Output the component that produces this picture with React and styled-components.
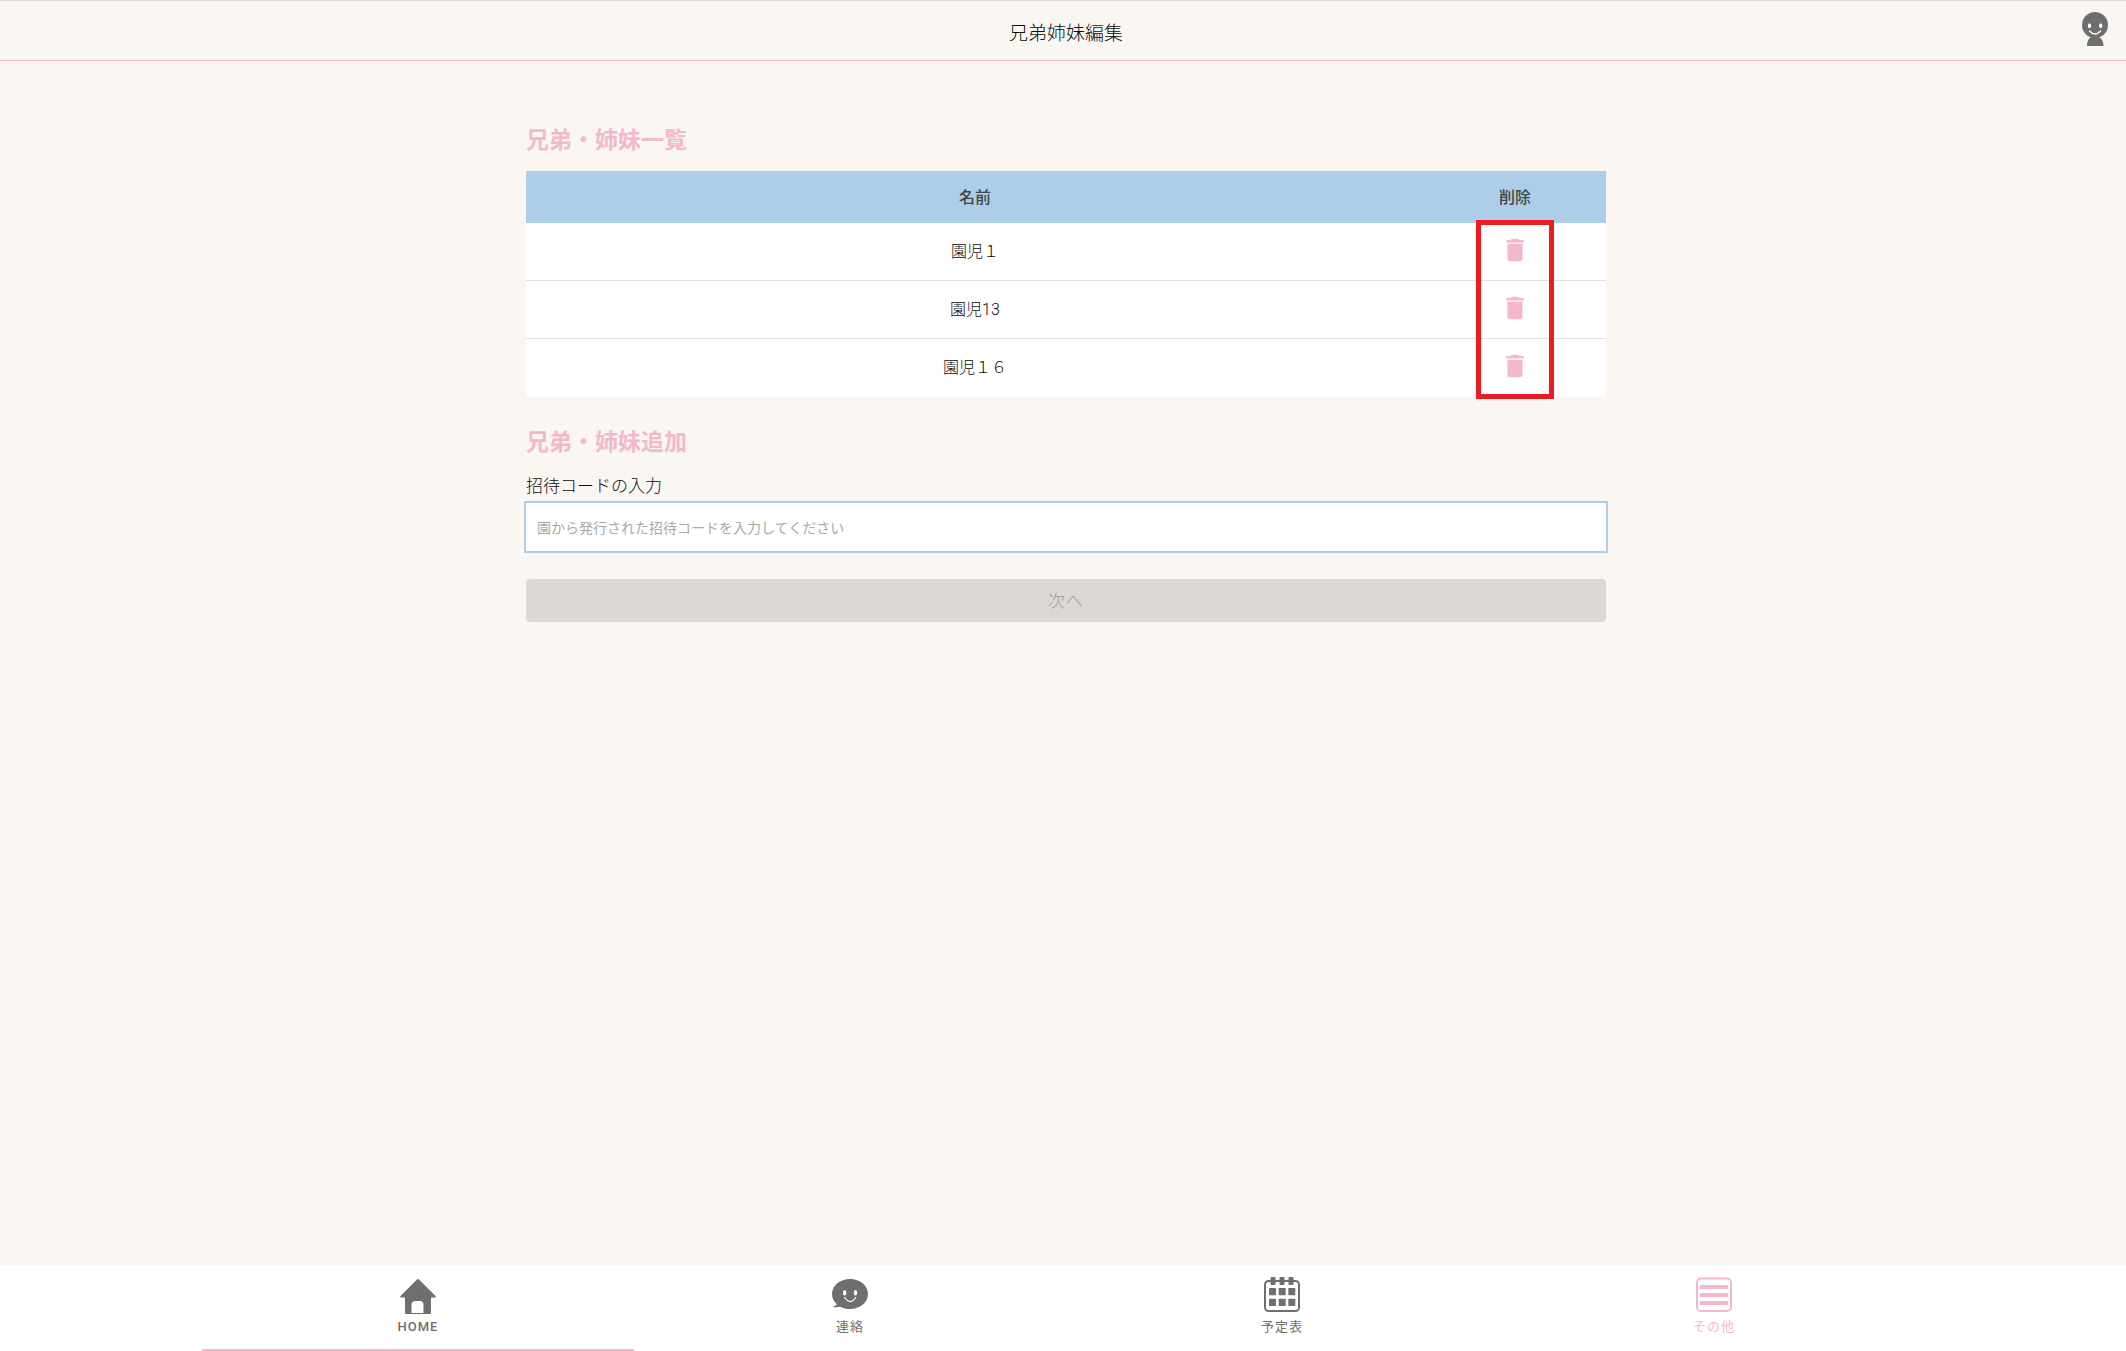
import React from "react";
import styled, { createGlobalStyle } from "styled-components";

const color = {
  page: "#faf7f2",
  pink: "#f4b8cd",
  blue: "#adcee9",
  grey: "#6f6f6f",
  text: "#0c0c0c",
  line: "#e0e0e0",
};

const GlobalStyle = createGlobalStyle`
  *, *::before, *::after { box-sizing: border-box; }
  body {
    margin: 0;
    background: ${color.page};
    color: ${color.text};
    font-family: Roboto, "Noto Sans CJK JP", sans-serif;
    font-weight: 300;
  }
`;

const Page = styled.div`
  min-height: 100vh;
  display: flex;
  flex-direction: column;
`;

const Header = styled.header`
  display: grid;
  grid-template-columns: 1fr auto 1fr;
  align-items: center;
  height: 61px;
  padding-left: 6px;
  border-top: 1px solid #dcdcdf;
  border-bottom: 1px solid ${color.pink};
`;

const Title = styled.h1`
  grid-column: 2;
  margin: 0;
  padding-top: 6px;
  font-size: 19px;
  line-height: 28px;
  font-weight: 300;
`;

const ProfileButton = styled.button`
  justify-self: end;
  display: flex;
  margin: 0 18px 4px 0;
  padding: 0;
  border: 0;
  background: none;
  cursor: pointer;
`;

const Main = styled.main`
  flex: 1;
  padding: 62px 0 40px 6px;
`;

const Content = styled.div`
  width: 100%;
  max-width: 1080px;
  margin: 0 auto;
`;

const SectionTitle = styled.h2`
  margin: 0;
  font-size: 23px;
  line-height: 36px;
  font-weight: 700;
  color: ${color.pink};
`;

const TableWrap = styled.div`
  position: relative;
  margin: 12px 0 28px;
`;

const Table = styled.table`
  width: 100%;
  table-layout: fixed;
  border-spacing: 0;
  border-radius: 4px;
  background: #fff;
  text-align: center;
  font-size: 16px;
  line-height: 24px;
`;

const HeadCell = styled.th`
  width: ${(p) => p.$width || "auto"};
  height: 52px;
  padding: 2px 0 0;
  background: ${color.blue};
  color: #444;
  font-weight: 500;
`;

const Cell = styled.td`
  height: 58px;
  padding: 0;
  border-bottom: 1px solid ${color.line};

  tr:last-child > & {
    border-bottom: 0;
  }
`;

const DeleteButton = styled.button`
  display: inline-flex;
  padding: 0 0 4px;
  border: 0;
  background: none;
  color: ${color.pink};
  vertical-align: middle;
  cursor: pointer;
`;

const Highlight = styled.div`
  position: absolute;
  top: 49px;
  bottom: -2px;
  right: 52px;
  width: 78px;
  border: 5px solid #ed1c24;
  pointer-events: none;
`;

const FieldLabel = styled.label`
  display: block;
  margin: 12px 0 2px;
  font-size: 17px;
  line-height: 26px;
`;

const CodeInput = styled.input`
  display: block;
  width: calc(100% + 4px);
  height: 52px;
  margin: 0 -2px;
  padding: 2px 11px 0;
  border: 2px solid ${color.blue};
  border-radius: 0;
  outline: 0;
  background: #fff;
  font: inherit;
  font-size: 14px;

  &::placeholder {
    color: #a8a8a8;
    opacity: 1;
    font-weight: 400;
  }
`;

const NextButton = styled.button`
  display: block;
  width: 100%;
  height: 43px;
  margin-top: 26px;
  padding: 0 0 2px;
  border: 0;
  border-radius: 4px;
  background: #dcd9d4;
  color: #a09e9b;
  font: inherit;
  font-size: 17px;
  letter-spacing: 1px;
`;

const BottomBar = styled.nav`
  padding-left: 6px;
  background: #fff;
`;

const Tabs = styled.div`
  display: grid;
  grid-template-columns: repeat(4, 1fr);
  max-width: 1728px;
  margin: 0 auto;
`;

const Tab = styled.a`
  display: flex;
  flex-direction: column;
  align-items: center;
  gap: 3px;
  height: 86px;
  padding-top: 11px;
  border-bottom: 2px solid ${(p) => (p.$underlined ? color.pink : "transparent")};
  color: ${(p) => (p.$pink ? color.pink : color.grey)};
  font-size: 13px;
  line-height: 20px;
  font-weight: ${(p) => (p.$medium ? 500 : 400)};
  letter-spacing: 1px;
  text-decoration: none;
`;

function ProfileIcon() {
  return (
    <svg width="26" height="34" viewBox="0 0 26 34" aria-hidden="true">
      <path fill={color.grey} d="M5 34c0-5 2-8 4.500-9.500h7C19 26 21.500 29 21.500 34z" />
      <circle cx="13" cy="13" r="13" fill={color.grey} />
      <ellipse cx="7.500" cy="13.800" rx="1.600" ry="2.500" fill="#fff" />
      <ellipse cx="18.700" cy="13.800" rx="1.600" ry="2.500" fill="#fff" />
      <path d="M7.500 19q5.500 6 11 0" fill="none" stroke="#fff" strokeWidth="1.300" strokeLinecap="round" />
    </svg>
  );
}

function TrashIcon() {
  return (
    <svg width="30" height="30" viewBox="0 0 24 24" fill="currentColor" aria-hidden="true">
      <path d="M6 19c0 1.100.9 2 2 2h8c1.100 0 2-.9 2-2V7H6v12zM19 4h-3.500l-1-1h-5l-1 1H5v2h14V4z" />
    </svg>
  );
}

function HomeIcon() {
  return (
    <svg width="36" height="38" viewBox="0 0 36 38" fill="currentColor" aria-hidden="true">
      <path d="M17 3.500q1-1 2 0L35.500 20q.8 1.500-.8 1.500H31V37q0 1-1 1h-6.500V29q0-4-4-4h-4q-4 0-4 4v9H6q-1 0-1-1V21.500H1.200Q-.4 21.500.5 20z" />
      <path d="M11 37h13v1H11z" />
    </svg>
  );
}

function TalkIcon() {
  return (
    <svg width="36" height="38" viewBox="0 0 36 38" aria-hidden="true">
      <path
        fill="currentColor"
        d="M18 3c10 0 18 6.500 18 15s-8 15-18 15c-3.800 0-7-.8-9.800-2.300C6 31.200 3 31.300.8 30.900c2-.7 3.500-1.600 4-2.600C1.700 25.500 0 22 0 18 0 9.500 8 3 18 3z"
      />
      <ellipse cx="12.700" cy="16.800" rx="1.700" ry="2.700" fill="#fff" />
      <ellipse cx="23.500" cy="16.800" rx="1.700" ry="2.700" fill="#fff" />
      <path d="M12.700 21.500q5.500 8 11 0" fill="none" stroke="#fff" strokeWidth="1.300" strokeLinecap="round" />
    </svg>
  );
}

function CalendarIcon() {
  const columns = [5, 14.700, 24.300];
  return (
    <svg width="36" height="38" viewBox="0 0 36 38" fill="currentColor" aria-hidden="true">
      <rect x="1" y="5" width="34" height="30" rx="3.500" fill="none" stroke="currentColor" strokeWidth="2" />
      {[6.500, 15.500, 24.500].map((x) => (
        <rect key={x} x={x} y="1" width="5" height="8" rx="1" />
      ))}
      {[12, 22.700].flatMap((y) =>
        columns.map((x) => <rect key={`${x}-${y}`} x={x} y={y} width="7" height="7.200" rx=".6" />)
      )}
    </svg>
  );
}

function ListIcon() {
  return (
    <svg width="36" height="38" viewBox="0 0 36 38" fill="currentColor" aria-hidden="true">
      <rect x="1" y="2.500" width="34" height="32.500" rx="4" fill="none" stroke="currentColor" strokeWidth="2" />
      {[9, 17, 25].map((y) => (
        <rect key={y} x="4" y={y} width="28" height="4" rx=".6" />
      ))}
    </svg>
  );
}

const children = ["園児１", "園児13", "園児１６"];

const tabs = [
  { label: "HOME", icon: <HomeIcon />, underlined: true, medium: true },
  { label: "連絡", icon: <TalkIcon /> },
  { label: "予定表", icon: <CalendarIcon /> },
  { label: "その他", icon: <ListIcon />, pink: true },
];

export default function App() {
  return (
    <Page lang="ja">
      <GlobalStyle />
      <Header>
        <Title>兄弟姉妹編集</Title>
        <ProfileButton type="button">
          <ProfileIcon />
        </ProfileButton>
      </Header>

      <Main>
        <Content>
          <SectionTitle>兄弟・姉妹一覧</SectionTitle>
          <TableWrap>
            <Table>
              <thead>
                <tr>
                  <HeadCell scope="col">名前</HeadCell>
                  <HeadCell scope="col" $width="182px">
                    削除
                  </HeadCell>
                </tr>
              </thead>
              <tbody>
                {children.map((name) => (
                  <tr key={name}>
                    <Cell>{name}</Cell>
                    <Cell>
                      <DeleteButton type="button">
                        <TrashIcon />
                      </DeleteButton>
                    </Cell>
                  </tr>
                ))}
              </tbody>
            </Table>
            <Highlight />
          </TableWrap>

          <SectionTitle>兄弟・姉妹追加</SectionTitle>
          <form onSubmit={(e) => e.preventDefault()}>
            <FieldLabel htmlFor="invite-code">招待コードの入力</FieldLabel>
            <CodeInput
              id="invite-code"
              type="text"
              placeholder="園から発行された招待コードを入力してください"
            />
            <NextButton type="submit" disabled>
              次へ
            </NextButton>
          </form>
        </Content>
      </Main>

      <BottomBar>
        <Tabs>
          {tabs.map((tab) => (
            <Tab
              key={tab.label}
              href="#"
              $pink={tab.pink}
              $underlined={tab.underlined}
              $medium={tab.medium}
            >
              {tab.icon}
              {tab.label}
            </Tab>
          ))}
        </Tabs>
      </BottomBar>
    </Page>
  );
}
